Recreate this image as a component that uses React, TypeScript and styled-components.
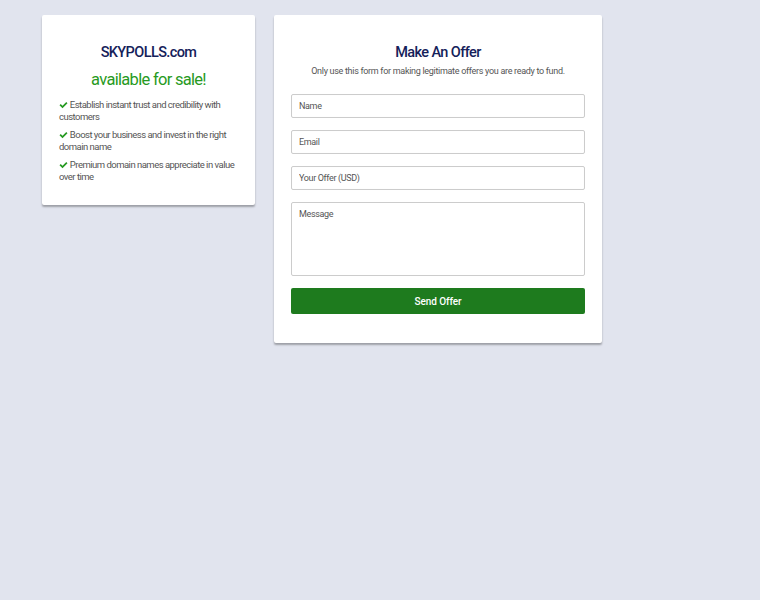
import React from 'react';
import styled, { createGlobalStyle } from 'styled-components';

const GlobalStyle = createGlobalStyle`
  html, body {
    margin: 0;
    padding: 0;
    background: #e1e4ee;
    font-family: Roboto, "Liberation Sans", Arial, sans-serif;
  }
`;

const Page = styled.div`
  display: flex;
  align-items: flex-start;
  gap: 19px;
  padding: 15px 0 0 42px;
  min-height: 585px;
`;

const Card = styled.div<{ width: number; bottom: number }>`
  width: ${({ width }) => width}px;
  box-sizing: border-box;
  background: #fff;
  border-radius: 2px;
  box-shadow: 0 2px 2px rgba(0, 0, 0, 0.3);
  padding: 29px 17px ${({ bottom }) => bottom}px;
`;

const Domain = styled.h1`
  margin: 0;
  text-align: center;
  font-size: 14.5px;
  letter-spacing: -0.6px;
  font-weight: 500;
  color: #15215a;
  line-height: 18px;
`;

const Sale = styled.h2`
  margin: 7px 0 0;
  text-align: center;
  font-size: 16.5px;
  letter-spacing: -0.7px;
  font-weight: 400;
  color: #279a22;
  line-height: 22px;
`;

const List = styled.ul`
  list-style: none;
  margin: 8px 0 0;
  padding: 0;
  display: flex;
  flex-direction: column;
  gap: 6px;
`;

const Item = styled.li`
  font-size: 9.5px;
  letter-spacing: -0.52px;
  line-height: 12px;
  color: #555;
`;

const Check = styled.svg`
  width: 9px;
  height: 8px;
  vertical-align: -0.5px;
`;

const Title = styled.h2`
  margin: 0;
  text-align: center;
  font-size: 14.5px;
  letter-spacing: -0.6px;
  font-weight: 500;
  color: #15215a;
  line-height: 18px;
`;

const Sub = styled.p`
  margin: 3px 0 0;
  text-align: center;
  font-size: 9px;
  letter-spacing: -0.3px;
  color: #555;
  line-height: 12px;
`;

const Form = styled.form`
  display: flex;
  flex-direction: column;
  gap: 12px;
  margin-top: 17px;
`;

const Field = styled.input`
  height: 24px;
  box-sizing: border-box;
  border: 1px solid #ccc;
  border-radius: 2px;
  padding: 0 7px;
  font-family: inherit;
  font-size: 9px;
  letter-spacing: -0.35px;
  color: #555;
  box-shadow: inset 0 0 1px rgba(0, 0, 0, 0.05);
  &::placeholder {
    color: #555;
  }
`;

const Area = styled.textarea`
  height: 74px;
  box-sizing: border-box;
  border: 1px solid #ccc;
  border-radius: 2px;
  padding: 6px 7px;
  font-family: inherit;
  font-size: 9px;
  letter-spacing: -0.35px;
  resize: none;
  &::placeholder {
    color: #555;
  }
`;

const Send = styled.button`
  height: 26px;
  border: none;
  border-radius: 2px;
  background: #1e7b1e;
  color: #fff;
  font-family: inherit;
  font-size: 10px;
  letter-spacing: -0.1px;
  font-weight: 500;
  cursor: pointer;
`;

const perks = [
  'Establish instant trust and credibility with customers',
  'Boost your business and invest in the right domain name',
  'Premium domain names appreciate in value over time',
];

const Tick = () => (
  <Check viewBox="0 0 18 16">
    <path d="M1 8.5l2.5-2.5 3.5 3.5L14.5 2 17 4.5 7 14.5z" fill="#279a22" />
  </Check>
);

export default function App() {
  return (
    <>
      <GlobalStyle />
      <Page>
        <Card width={213} bottom={22}>
          <Domain>SKYPOLLS.com</Domain>
          <Sale>available for sale!</Sale>
          <List>
            {perks.map((p) => (
              <Item key={p}>
                <Tick /> {p}
              </Item>
            ))}
          </List>
        </Card>
        <Card width={328} bottom={29}>
          <Title>Make An Offer</Title>
          <Sub>Only use this form for making legitimate offers you are ready to fund.</Sub>
          <Form onSubmit={(e) => e.preventDefault()}>
            <Field placeholder="Name" />
            <Field placeholder="Email" />
            <Field placeholder="Your Offer (USD)" />
            <Area placeholder="Message" />
            <Send type="submit">Send Offer</Send>
          </Form>
        </Card>
      </Page>
    </>
  );
}
